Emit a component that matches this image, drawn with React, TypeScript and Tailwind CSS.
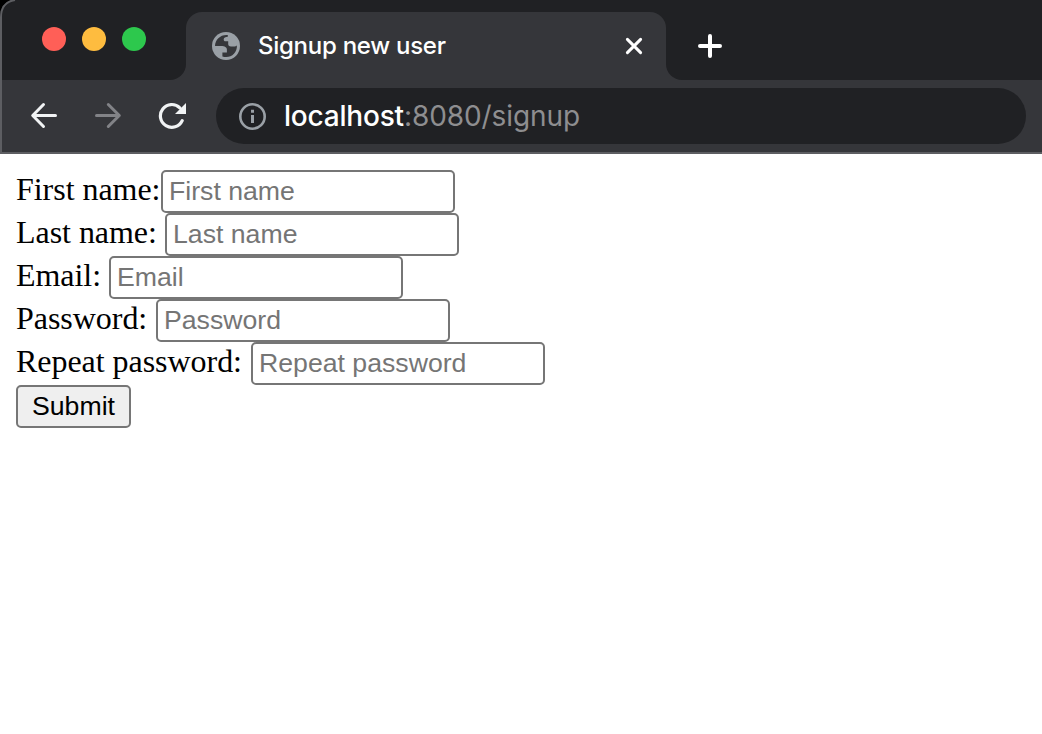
import React from "react";

const rows = [
  { label: "First name:", hint: "First name", width: "w-[145px]", type: "text" },
  { label: "Last name:", hint: "Last name", width: "w-[149px]", type: "text" },
  { label: "Email:", hint: "Email", width: "w-[93px]", type: "text" },
  { label: "Password:", hint: "Password", width: "w-[140px]", type: "password" },
  { label: "Repeat password:", hint: "Repeat password", width: "w-[235px]", type: "password" },
];

function Globe() {
  return (
    <svg className="size-7 shrink-0" viewBox="0 0 28 28">
      <circle cx="14" cy="14" r="14" fill="#9aa0a6" />
      <path
        d="M15.8 3.1C8.5 2.4 3.2 7.6 3 13.9H9.3C12.6 13.9 14.9 15 14.9 17.6V20.6H10.4V24.4C18 27 25.4 21.4 24.9 13.2C24.2 14.2 23.2 14.6 21.6 14.6H19C17 14.6 16.2 13.4 16.2 12.1V9.3H13.6C12.3 9.3 11.7 8.5 11.7 7.4C11.7 5.5 13.4 4.9 15.8 4.7Z"
        fill="#35363a"
      />
    </svg>
  );
}

function TabStrip() {
  return (
    <div className="flex h-20 bg-[#202124]">
      <div className="flex w-[186px] bg-[#35363a]">
        <div className="flex flex-1 gap-4 rounded-br-[16px] bg-[#202124] pl-[42px] pt-[27px]">
          <span className="size-6 rounded-full bg-[#ff5f57]" />
          <span className="size-6 rounded-full bg-[#febc3f]" />
          <span className="size-6 rounded-full bg-[#2dc84d]" />
        </div>
      </div>
      <div className="flex w-[480px] flex-col">
        <div className="mt-3 flex flex-1 items-center rounded-t-[16px] bg-[#35363a] pl-[26px] pr-[23px]">
          <Globe />
          <span className="ml-[18px] flex-1 whitespace-nowrap font-['Inter',sans-serif] text-[24px] font-[450] leading-7 tracking-[-0.27px] text-white">
            Signup new user
          </span>
          <svg className="size-[18px]" viewBox="0 0 18 18" stroke="white" strokeWidth="3" strokeLinecap="round">
            <path d="M2.4 2.4 15.6 15.6M15.6 2.4 2.4 15.6" />
          </svg>
        </div>
      </div>
      <div className="flex flex-1 bg-[#35363a]">
        <div className="flex-1 rounded-bl-[16px] bg-[#202124] pl-8 pt-[34px]">
          <svg className="size-6" viewBox="0 0 24 24" stroke="white" strokeWidth="4" strokeLinecap="round">
            <path d="M12 2V22M2 12H22" />
          </svg>
        </div>
      </div>
    </div>
  );
}

function Toolbar() {
  return (
    <div className="flex h-[74px] items-center border-b-2 border-[#5d5e62] bg-[#35363a] pl-[30px] pr-4">
      <svg className="size-7" viewBox="0 0 28 28" fill="none" stroke="#f1f3f4" strokeWidth="3" strokeLinecap="round" strokeLinejoin="round">
        <path d="M25.5 13.5H3M13.5 2.5 2.7 13.5 13.5 24.5" />
      </svg>
      <svg className="ml-9 size-7" viewBox="0 0 28 28" fill="none" stroke="#828387" strokeWidth="3" strokeLinecap="round" strokeLinejoin="round">
        <path d="M2.5 13.5H25.2M14.3 2.5 25.3 13.5 14.3 24.5" />
      </svg>
      <svg className="ml-9 size-7" viewBox="0 0 28 28" fill="none">
        <path d="M24.2 18.6A11.4 11.4 0 1 1 21.8 5.8" stroke="#f1f3f4" strokeWidth="3.2" strokeLinecap="round" />
        <path d="M28 1V12H17Z" fill="#f1f3f4" />
      </svg>
      <div className="ml-[30px] flex h-14 flex-1 items-center rounded-full bg-[#202124] pl-[23px]">
        <svg className="size-[27px]" viewBox="0 0 27 27" fill="none">
          <circle cx="13.5" cy="13.5" r="12.2" stroke="#9aa0a6" strokeWidth="2.6" />
          <path d="M12 6.8H15V9.8H12ZM12 12H15V20H12Z" fill="#9aa0a6" />
        </svg>
        <span className="ml-[18px] whitespace-nowrap font-['Inter',sans-serif] text-[28px] leading-8 tracking-[-0.08px] text-[#8e8e90]">
          <span className="font-[450] tracking-[-0.2px] text-white">localhost</span>:8080/signup
        </span>
      </div>
    </div>
  );
}

export default function App() {
  return (
    <div className="h-[734px] w-[1042px] overflow-hidden bg-white font-['Liberation_Serif',serif] text-black">
      <header className="relative">
        <TabStrip />
        <Toolbar />
        <svg className="absolute left-0 top-0 h-[154px] w-4" viewBox="0 0 16 154" fill="none">
          <path d="M0 0H14Q2 1 0 14Z" fill="#000" />
          <path d="M1 154V17Q1 2 15 0" stroke="#5d5e62" strokeWidth="2" />
        </svg>
      </header>
      <form className="flex flex-col items-start px-4 pt-4" onSubmit={(event) => event.preventDefault()}>
        {rows.map((row) => (
          <label key={row.hint} className="flex h-[43px] items-start">
            <span className={`${row.width} whitespace-nowrap text-[32px] leading-[38px] tracking-[-0.04px]`}>{row.label}</span>
            <input
              type={row.type}
              placeholder={row.hint}
              className="h-[43px] w-[294px] rounded-[5px] border-2 border-[#767676] bg-white px-[6px] font-['Liberation_Sans',sans-serif] text-[26.67px] text-black outline-none placeholder:text-[#757575]"
            />
          </label>
        ))}
        <button className="h-[43px] w-[115px] rounded-[5px] border-2 border-[#767676] bg-[#efefef] font-['Liberation_Sans',sans-serif] text-[26.67px] leading-[39px]">
          Submit
        </button>
      </form>
    </div>
  );
}
